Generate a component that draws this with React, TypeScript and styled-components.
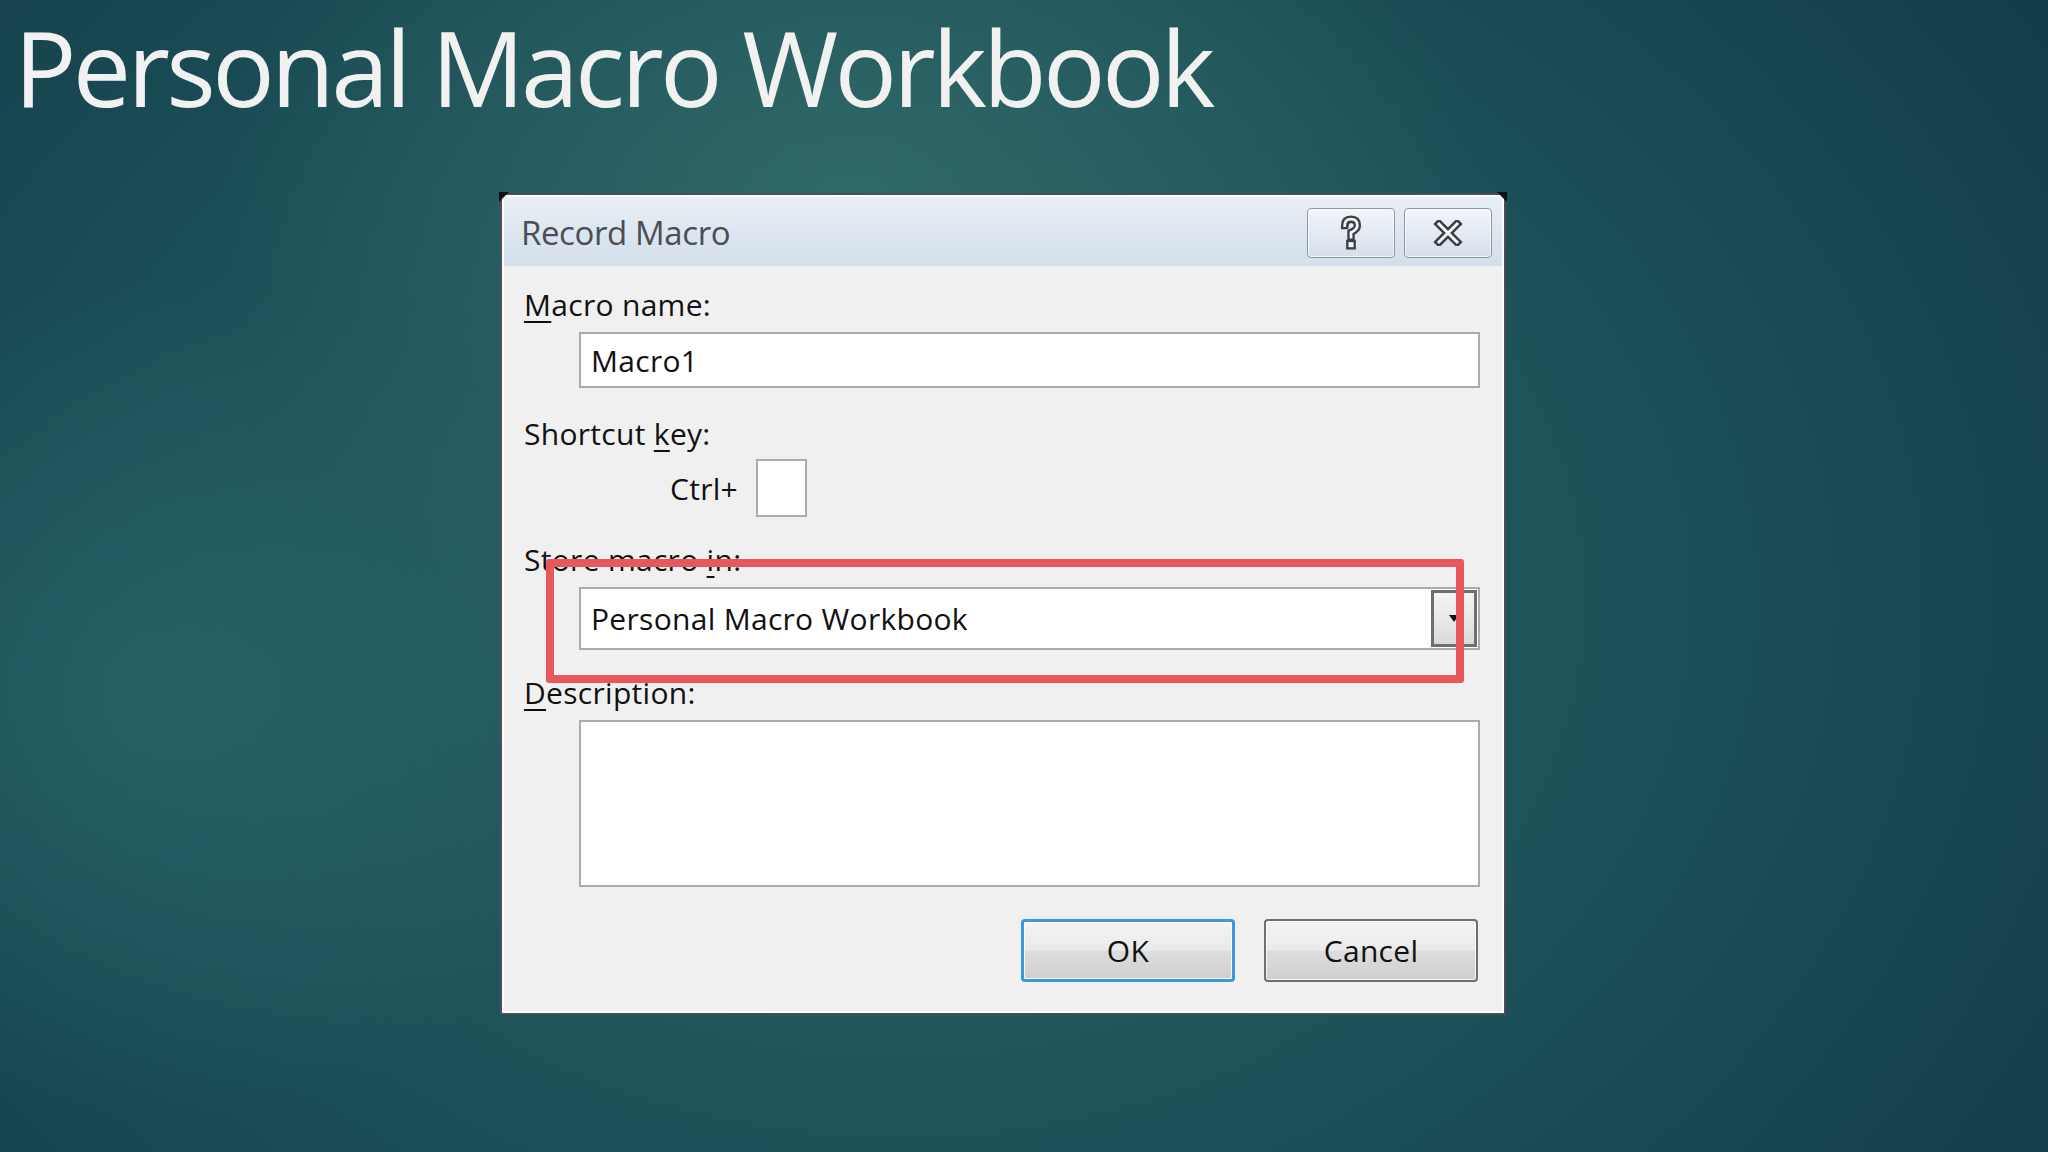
import React from "react";
import styled, { createGlobalStyle } from "styled-components";

const GlobalStyle = createGlobalStyle`
  html, body {
    margin: 0;
    padding: 0;
    width: 2048px;
    height: 1152px;
    overflow: hidden;
  }
  body {
    font-family: "Open Sans", "Noto Sans", sans-serif;
  }
`;

function App() {
  return (
    <Page>
      <GlobalStyle />
      <Title>Personal Macro Workbook</Title>

      <Window>
        <TitleBar>
          <WindowTitle>Record Macro</WindowTitle>
          <Caption>
            <CaptionButton aria-label="Help">
              <HelpGlyph />
            </CaptionButton>
            <CaptionButton aria-label="Close">
              <CloseGlyph />
            </CaptionButton>
          </Caption>
        </TitleBar>

        <Body>
          <Label>
            <u>M</u>acro name:
          </Label>
          <TextBox height={56}>Macro1</TextBox>

          <Label>
            Shortcut <u>k</u>ey:
          </Label>
          <CtrlRow>
            <CtrlLabel>Ctrl+</CtrlLabel>
            <KeyBox />
          </CtrlRow>

          <StoreGroup>
            <Label>
              Store macro <u>i</u>n:
            </Label>
            <Combo>
              <ComboText>Personal Macro Workbook</ComboText>
              <ComboButton>
                <svg width="12" height="10" viewBox="0 0 12 10">
                  <path d="M1 1 L11 1 L6 8 Z" fill="#111" />
                </svg>
              </ComboButton>
            </Combo>
            <Highlight />
          </StoreGroup>

          <Label>
            <u>D</u>escription:
          </Label>
          <TextBox height={167} />

          <Buttons>
            <DialogButton primary>OK</DialogButton>
            <DialogButton>Cancel</DialogButton>
          </Buttons>
        </Body>
      </Window>
    </Page>
  );
}

function HelpGlyph() {
  const d = "M7 10 Q7 4 13 4 Q19 4 19 10 Q19 14 13 16.5 L13 21";
  return (
    <svg width="28" height="36" viewBox="0 0 26 34">
      <g fill="none" strokeLinecap="square">
        <path d={d} stroke="#3b3f45" strokeWidth="7" />
        <path d={d} stroke="#f2f4f7" strokeWidth="2.6" />
        <rect x="9.5" y="24.5" width="7" height="7" fill="#f2f4f7" stroke="#3b3f45" strokeWidth="2.2" />
      </g>
    </svg>
  );
}

function CloseGlyph() {
  return (
    <svg width="30" height="26" viewBox="0 0 30 26">
      <g fill="none" strokeLinecap="square">
        <path d="M6 4 L24 22 M24 4 L6 22" stroke="#3b3f45" strokeWidth="8" />
        <path d="M6 4 L24 22 M24 4 L6 22" stroke="#f4f6f8" strokeWidth="3" />
      </g>
    </svg>
  );
}

const Page = styled.div`
  width: 2048px;
  height: 1152px;
  box-sizing: border-box;
  padding: 2px 0 0 14px;
  background:
    radial-gradient(ellipse 900px 700px at 850px 200px, rgba(60, 120, 115, 0.55), rgba(60, 120, 115, 0) 70%),
    radial-gradient(ellipse 700px 600px at 150px 700px, rgba(45, 115, 115, 0.5), rgba(45, 115, 115, 0) 70%),
    radial-gradient(ellipse 1400px 1100px at 900px 600px, #2a6364 0%, #1d5058 55%, #123c48 100%);
  display: flex;
  flex-direction: column;
`;

const Title = styled.h1`
  margin: 0;
  font-family: "Open Sans", sans-serif;
  font-weight: 400;
  font-size: 104px;
  line-height: 130px;
  letter-spacing: -3.7px;
  color: #f1f1f1;
`;

const Window = styled.div`
  position: relative;
  margin: 61px 0 0 486px;
  width: 1006px;
  box-sizing: border-box;
  border: 2px solid #4a4f55;
  background: #f0f0f0;
  box-shadow: 0 0 0 2px rgba(255, 255, 255, 0.85) inset;

  &::before,
  &::after {
    content: "";
    position: absolute;
    top: -3px;
    width: 0;
    height: 0;
    border-top: 10px solid #111;
  }
  &::before {
    left: -3px;
    border-right: 10px solid transparent;
  }
  &::after {
    right: -3px;
    border-left: 10px solid transparent;
  }
`;

const TitleBar = styled.div`
  height: 69px;
  display: flex;
  align-items: center;
  justify-content: space-between;
  padding: 0 10px 0 17px;
  margin: 2px 2px 0 2px;
  background: linear-gradient(180deg, #e9eff5 0%, #dbe5ef 60%, #d3dfeb 100%);
`;

const WindowTitle = styled.span`
  font-family: "Open Sans", sans-serif;
  font-size: 33px;
  letter-spacing: -0.4px;
  color: #4b4e54;
  margin-top: 2px;
`;

const Caption = styled.div`
  display: flex;
  gap: 9px;
  align-self: flex-start;
  margin-top: 11px;
`;

const CaptionButton = styled.div`
  width: 88px;
  height: 50px;
  box-sizing: border-box;
  border: 1px solid #8b98a6;
  border-radius: 4px;
  background: linear-gradient(180deg, #f2f5f9 0%, #e3eaf2 50%, #d5dfea 100%);
  box-shadow: inset 0 0 0 1px rgba(255, 255, 255, 0.7);
  display: flex;
  align-items: center;
  justify-content: center;
`;

const Body = styled.div`
  padding: 20px 24px 31px 22px;
  display: flex;
  flex-direction: column;
`;

const Label = styled.div`
  font-family: "Open Sans", sans-serif;
  font-size: 30px;
  font-weight: 500;
  line-height: 38px;
  letter-spacing: 0.3px;
  color: #111;
  margin-bottom: 8px;

  u {
    text-decoration-thickness: 2px;
    text-underline-offset: 5px;
  }
`;

const TextBox = styled.div<{ height: number }>`
  margin: 0 0 27px 55px;
  height: ${p => p.height}px;
  box-sizing: border-box;
  border: 2px solid #ababab;
  background: #fff;
  padding: 0 10px;
  display: flex;
  align-items: center;
  font-family: "Open Sans", sans-serif;
  font-size: 30px;
  font-weight: 500;
  letter-spacing: 0.3px;
  color: #111;
`;

const CtrlRow = styled.div`
  display: flex;
  align-items: center;
  gap: 18px;
  margin: -2px 0 24px 146px;
`;

const CtrlLabel = styled.span`
  font-family: "Open Sans", sans-serif;
  font-size: 30px;
  font-weight: 500;
  letter-spacing: 0.3px;
  color: #111;
`;

const KeyBox = styled.div`
  width: 51px;
  height: 58px;
  box-sizing: border-box;
  border: 2px solid #ababab;
  background: #fff;
`;

const StoreGroup = styled.div`
  position: relative;
  display: flex;
  flex-direction: column;
  margin-bottom: 24px;
`;

const Combo = styled.div`
  margin-left: 55px;
  height: 63px;
  box-sizing: border-box;
  border: 2px solid #ababab;
  background: #fff;
  display: flex;
  align-items: stretch;
`;

const ComboText = styled.div`
  flex: 1;
  display: flex;
  align-items: center;
  padding-left: 10px;
  font-family: "Open Sans", sans-serif;
  font-size: 30px;
  font-weight: 500;
  letter-spacing: 0.3px;
  color: #111;
`;

const ComboButton = styled.div`
  width: 46px;
  margin: 1px;
  box-sizing: border-box;
  border: 3px solid #6f6f6f;
  background: linear-gradient(180deg, #f4f4f4 0%, #e9e9e9 50%, #d9d9d9 100%);
  display: flex;
  align-items: center;
  justify-content: center;
`;

const Highlight = styled.div`
  position: absolute;
  left: 22px;
  top: 18px;
  width: 918px;
  height: 124px;
  box-sizing: border-box;
  border: 8px solid #e8575a;
  border-radius: 3px;
  pointer-events: none;
`;

const Buttons = styled.div`
  display: flex;
  justify-content: flex-end;
  gap: 29px;
  margin-top: 5px;
  padding-right: 2px;
`;

const DialogButton = styled.div<{ primary?: boolean }>`
  width: 214px;
  height: 63px;
  box-sizing: border-box;
  border: ${p => (p.primary ? "3px solid #3a9ad9" : "2px solid #707070")};
  border-radius: 4px;
  background: linear-gradient(180deg, #f3f3f3 0%, #ebebeb 48%, #dddddd 52%, #cfcfcf 100%);
  box-shadow: inset 0 0 0 1px rgba(255, 255, 255, 0.8);
  display: flex;
  align-items: center;
  justify-content: center;
  font-family: "Open Sans", sans-serif;
  font-size: 30px;
  font-weight: 500;
  letter-spacing: 0.3px;
  color: #111;
`;

export default App;
